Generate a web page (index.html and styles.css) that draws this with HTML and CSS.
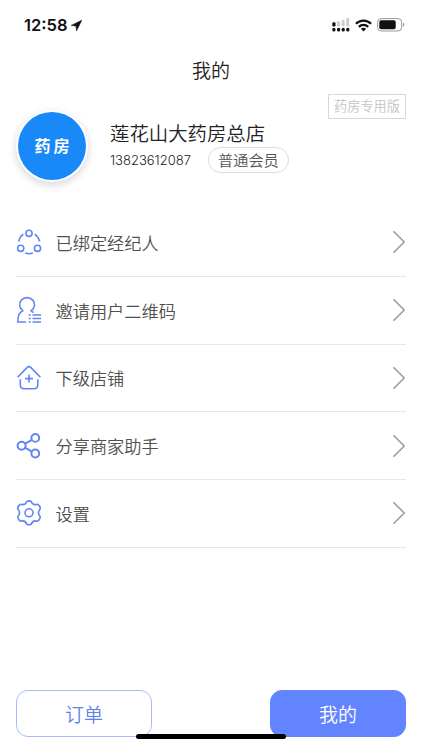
FILE: index.html
```html
<!DOCTYPE html>
<html lang="zh-CN">
  <head>
    <meta charset="UTF-8" />
    <meta name="viewport" content="width=device-width, initial-scale=1.0" />
    <title>我的</title>
    <link rel="stylesheet" href="styles.css">
  </head>
  <body>
    <div class="app">
      <div class="status-bar">
        <div class="status-time">
          <span>12:58</span>
          <svg class="location-icon" width="11" height="11" viewBox="0 0 11 11">
            <path d="M10.8 0.2L0.2 5.4L5 6L5.6 10.8Z" fill="#111" stroke="#111" stroke-width="0.6" stroke-linejoin="round" />
          </svg>
        </div>
        <div class="status-icons">
          <svg width="18" height="15" viewBox="0 0 18 15">
            <g fill="#ccc">
              <rect x="5" y="3.3" width="3" height="5" rx="1" />
              <rect x="9.6" y="1.7" width="3" height="6.6" rx="1" />
              <rect x="14.2" y="0" width="3" height="8.3" rx="1" />
            </g>
            <g fill="#111">
              <rect x="0.3" y="4.2" width="3.2" height="4.2" rx="1.2" />
              <rect x="0.3" y="9.8" width="3.2" height="3.8" rx="1.5" />
              <rect x="5" y="9.8" width="3.2" height="3.8" rx="1.5" />
              <rect x="9.6" y="9.8" width="3.2" height="3.8" rx="1.5" />
              <rect x="14.2" y="9.8" width="3.2" height="3.8" rx="1.5" />
            </g>
          </svg>
          <svg width="17" height="13" viewBox="0 0 17 13">
            <g fill="none" stroke="#111" stroke-width="2.2">
              <path d="M0.9 4.8C5.2 0.5 11.8 0.5 16.1 4.8" />
              <path d="M3.8 7.9C6.5 5.3 10.5 5.3 13.2 7.9" />
            </g>
            <path d="M5.9 9.7C7.4 8.4 9.6 8.4 11.1 9.7L8.5 12.4Z" fill="#111" />
          </svg>
          <svg width="28" height="14" viewBox="0 0 28 14">
            <rect x="0.6" y="0.6" width="24" height="12.4" rx="3.6" fill="none" stroke="#999" />
            <rect x="2.3" y="2.3" width="16.4" height="9" rx="1.8" fill="#111" />
            <path d="M26 4.8C27.7 5.3 27.7 8.3 26 8.8Z" fill="#999" />
          </svg>
        </div>
      </div>

      <h1 class="page-title">我的</h1>

      <div class="profile">
        <div class="avatar">药房</div>
        <div class="profile-info">
          <div class="profile-name">莲花山大药房总店</div>
          <div class="profile-meta">
            <span class="profile-phone">13823612087</span>
            <span class="member-badge">普通会员</span>
          </div>
        </div>
        <div class="version-tag">药房专用版</div>
      </div>

      <ul class="menu">
        <li class="menu-item">
          <svg class="menu-icon" viewBox="0 0 26 28">
            <circle cx="13" cy="5.3" r="3.1" />
            <circle cx="4.7" cy="20.3" r="3.1" />
            <circle cx="21.5" cy="20.3" r="3.1" />
            <path d="M7.3 6.2Q3.8 8.6 2.8 13.6M18.7 6.2Q22.2 8.6 23.7 13.6M9.2 25Q13 26.4 16.8 25" />
          </svg>
          <span class="menu-label">已绑定经纪人</span>
          <svg class="menu-arrow" viewBox="0 0 14 24"><path d="M1.4 1.2L12.2 12L1.4 22.8" /></svg>
        </li>
        <li class="menu-item">
          <svg class="menu-icon" viewBox="0 0 26 28">
            <path d="M7.2 14.8A7.5 7.1 0 1 1 15 14.8" />
            <path d="M7.2 14.8Q1.6 16.5 1.8 26H10M14.6 14.4L17.4 16.6" />
            <path d="M12.7 19h2M12.7 22.5h2M12.7 26h2M16.5 19h8.5M16.5 22.5h8.5M16.5 26h8.5" />
          </svg>
          <span class="menu-label">邀请用户二维码</span>
          <svg class="menu-arrow" viewBox="0 0 14 24"><path d="M1.4 1.2L12.2 12L1.4 22.8" /></svg>
        </li>
        <li class="menu-item">
          <svg class="menu-icon" viewBox="0 0 26 28">
            <path d="M1.6 13.3L11.3 3.4Q13 1.9 14.7 3.4L24.4 13.3" />
            <path d="M4.3 15.2V20.7Q4.3 24.7 8.3 24.7H17.8Q21.8 24.7 21.8 20.7V15.2" />
            <path d="M13 10.6V18.6M9 14.6H17" />
          </svg>
          <span class="menu-label">下级店铺</span>
          <svg class="menu-arrow" viewBox="0 0 14 24"><path d="M1.4 1.2L12.2 12L1.4 22.8" /></svg>
        </li>
        <li class="menu-item">
          <svg class="menu-icon menu-icon-bold" viewBox="0 0 26 28">
            <circle cx="5.6" cy="13.7" r="4" />
            <circle cx="19.3" cy="5.9" r="3.9" />
            <circle cx="19.3" cy="21.5" r="3.9" />
            <path d="M9.1 11.7L15.9 7.8M9.1 15.7L15.9 19.6" />
          </svg>
          <span class="menu-label">分享商家助手</span>
          <svg class="menu-arrow" viewBox="0 0 14 24"><path d="M1.4 1.2L12.2 12L1.4 22.8" /></svg>
        </li>
        <li class="menu-item">
          <svg class="menu-icon" viewBox="0 0 26 28">
            <path d="M10.8 2.5Q13 1.2 15.2 2.5C16.1 5.4 18.2 6.2 21.6 5.3Q24.1 6.7 24.3 9.7C22.1 12 22.1 15.3 24.3 17.8Q24.1 20.8 21.6 22.2C18.2 21.3 16.1 22.3 15.2 25.2Q13 26.4 10.8 25.2C9.9 22.3 7.8 21.3 4.4 22.2Q1.9 20.8 1.7 17.8C3.9 15.3 3.9 12 1.7 9.7Q1.9 6.7 4.4 5.3C7.8 6.2 9.9 5.4 10.8 2.5Z" />
            <circle cx="13" cy="13.8" r="4" />
          </svg>
          <span class="menu-label">设置</span>
          <svg class="menu-arrow" viewBox="0 0 14 24"><path d="M1.4 1.2L12.2 12L1.4 22.8" /></svg>
        </li>
      </ul>

      <div class="tab-bar">
        <button class="tab">订单</button>
        <button class="tab tab-active">我的</button>
      </div>
      <div class="home-indicator"></div>
    </div>
  </body>
</html>
```
FILE: styles.css
```css
* {
  margin: 0;
  padding: 0;
  box-sizing: border-box;
}

body {
  font-family: "Noto Sans CJK SC", sans-serif;
  font-weight: 350;
  background: #fff;
  color: #222;
}

.app {
  position: relative;
  width: 422px;
  height: 750px;
  padding: 0 16px;
  display: flex;
  flex-direction: column;
  overflow: hidden;
}

.status-bar {
  height: 50px;
  padding: 0 1px 0 8px;
  display: flex;
  align-items: center;
  justify-content: space-between;
}

.status-time {
  display: flex;
  align-items: center;
  gap: 4px;
  font-family: Inter, sans-serif;
  font-size: 16.5px;
  font-weight: 600;
  color: #111;
}

.status-icons {
  display: flex;
  align-items: center;
  gap: 5px;
}

.page-title {
  height: 39px;
  line-height: 39px;
  text-align: center;
  font-size: 19px;
  font-weight: 350;
}

.profile {
  height: 120px;
  padding: 23px 0 0 2px;
  display: flex;
  align-items: flex-start;
}

.avatar {
  width: 68px;
  height: 68px;
  border-radius: 50%;
  background: #1989fa;
  box-shadow: 0 0 0 2px #fff, 0 3px 8px 2px rgba(0, 0, 0, 0.16);
  color: #fff;
  font-size: 16px;
  font-weight: 700;
  line-height: 67px;
  letter-spacing: 3px;
  padding-left: 3px;
  text-align: center;
}

.profile-info {
  margin: 7px 0 0 24px;
}

.profile-name {
  font-size: 19.4px;
  line-height: 27px;
}

.profile-meta {
  display: flex;
  align-items: center;
  gap: 16px;
  margin-top: 1px;
}

.profile-phone {
  width: 82px;
  font-family: Inter, sans-serif;
  font-size: 13px;
}

.member-badge {
  height: 26px;
  padding: 0 9px;
  border: 1px solid #ddd;
  border-radius: 13px;
  font-size: 15.2px;
  line-height: 23px;
  color: #555;
}

.version-tag {
  margin: -18px 0 0 auto;
  height: 25px;
  padding: 0 5px;
  border: 1px solid #d8d8d8;
  font-size: 13.2px;
  line-height: 22px;
  color: #c4c4c4;
}

.menu {
  list-style: none;
}

.menu-item {
  height: 67.75px;
  display: flex;
  align-items: center;
  border-bottom: 1px solid #e8e8e8;
}

.menu-icon {
  width: 26px;
  height: 28px;
  fill: none;
  stroke: #6285f5;
  stroke-width: 1.6;
}

.menu-icon-bold {
  stroke-width: 2;
}

.menu-label {
  margin-left: 13.5px;
  flex: 1;
  font-size: 17.2px;
  color: #505050;
}

.menu-arrow {
  width: 14px;
  height: 24px;
  fill: none;
  stroke: #999;
  stroke-width: 1.5;
}

.tab-bar {
  margin-top: auto;
  padding-bottom: 13px;
  display: flex;
  justify-content: space-between;
}

.tab {
  width: 136px;
  height: 47px;
  border: 1px solid #a9b9fb;
  border-radius: 12px;
  background: #fff;
  color: #5b82ee;
  font-family: inherit;
  font-size: 19px;
  font-weight: 350;
}

.tab-active {
  border-color: #6285ff;
  background: #6285ff;
  color: #fff;
}

.home-indicator {
  position: absolute;
  left: 136px;
  bottom: 11px;
  width: 150px;
  height: 5px;
  border-radius: 3px;
  background: #000;
}
```
